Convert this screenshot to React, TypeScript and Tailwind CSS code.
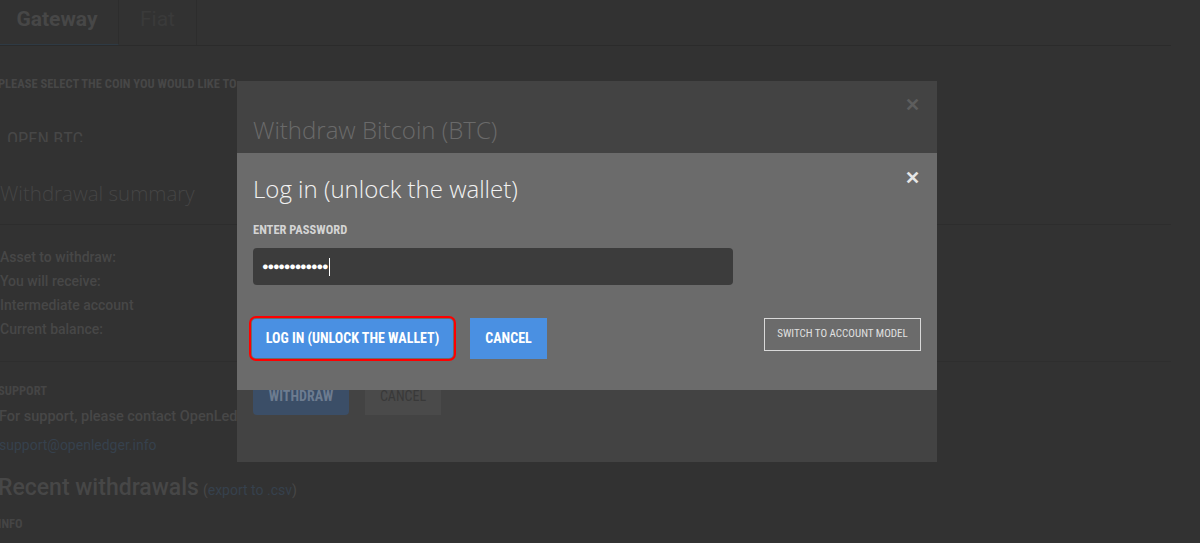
import React from "react";

const cond = { fontFamily: "'Liberation Sans Narrow', 'Roboto Condensed', Roboto, sans-serif" };
const light = { fontFamily: "'Open Sans', sans-serif" };

export default function App() {
  return (
    <div className="relative h-[543px] w-[1200px] overflow-hidden bg-[#323232]" style={{ fontFamily: "Roboto, 'Liberation Sans', sans-serif" }}>
      {/* Page underneath */}
      <div className="w-[1171px]">
        <div className="flex h-[46px] border-b border-[#2b2b2b]">
          <div className="flex w-[119px] items-center justify-center border-r border-b border-r-[#2d2d2d] border-b-[#2e3a44] pb-[5px] pr-[4px] text-[21px] font-bold text-[#474747]">Gateway</div>
          <div className="flex w-[78px] items-center justify-center border-r border-[#2d2d2d] pb-[5px] text-[21px] text-[#3a3a3a]">Fiat</div>
        </div>
        <div className="mt-[30px] -ml-[2px] h-[16px] text-[12.5px] font-bold leading-[16px] text-[#474747]" style={cond}>PLEASE SELECT THE COIN YOU WOULD LIKE TO</div>
        <div className="mt-[35px] h-[15px] overflow-hidden pl-[7px] text-[18.5px] leading-[24px] text-[#474747]" style={cond}>OPEN BTC</div>
        <div className="mt-[37px] h-[46px] border-b border-[#2d2d2d] text-[20.5px] font-light leading-[28px] text-[#454545]" style={light}>Withdrawal summary</div>
        <div className="mt-[20px] flex flex-col text-[14px] font-medium leading-[24px] text-[#474747]">
          <div>Asset to withdraw:</div>
          <div>You will receive:</div>
          <div>Intermediate account</div>
          <div>Current balance:</div>
        </div>
        <div className="mt-[20px] border-t border-[#2e2e2e]"></div>
        <div className="mt-[21px] -ml-[2px] h-[16px] text-[12.5px] font-bold leading-[16px] text-[#454545]" style={cond}>SUPPORT</div>
        <div className="mt-[8px] -ml-[1px] h-[20px] whitespace-nowrap text-[14.5px] font-medium leading-[20px] text-[#474747]">For support, please contact OpenLedger:</div>
        <div className="mt-[8px] -ml-[1px] h-[20px] text-[14px] leading-[20px] text-[#36414d]">support@openledger.info</div>
        <div className="mt-[18px] -ml-[2px] flex h-[30px] items-baseline leading-[30px]">
          <span className="text-[23px] font-medium text-[#474747]">Recent withdrawals</span>
          <span className="ml-[4px] text-[14px] text-[#474747]">(<span className="text-[#36414d]">export to .csv</span>)</span>
        </div>
        <div className="mt-[13px] -ml-[2px] h-[16px] text-[12.5px] font-bold leading-[16px] text-[#454545]" style={cond}>INFO</div>
      </div>

      {/* Withdraw modal (dimmed) */}
      <div className="absolute left-[237px] top-[81px] flex h-[381px] w-[700px] flex-col bg-[#434343] px-[16px]">
        <div className="absolute right-[17px] top-[15px] text-[18px] font-bold leading-none text-[#5d5d5d]">✕</div>
        <div className="mt-[31px] text-[24px] font-light text-[#6a6a6a]" style={light}>Withdraw Bitcoin (BTC)</div>
        <div className="mt-auto mb-[47px] flex gap-[16px]">
          <div className="flex h-[38px] w-[96px] items-center justify-center rounded-[4px] bg-[#3b4e67] text-[14px] font-bold text-[#6d7c90]" style={cond}>WITHDRAW</div>
          <div className="flex h-[38px] w-[76px] items-center justify-center bg-[#4a4a4a] text-[14px] text-[#393939]" style={cond}>CANCEL</div>
        </div>
      </div>

      {/* Login modal */}
      <div className="absolute left-[237px] top-[153px] h-[237px] w-[700px] bg-[#6b6b6b] px-[16px]">
        <div className="absolute right-[17px] top-[16px] text-[18px] font-bold leading-none text-[#e6e6e6]">✕</div>
        <div className="mt-[20px] text-[24px] font-light leading-[32px] text-[#f2f2f2]" style={light}>Log in (unlock the wallet)</div>
        <div className="mt-[17px] h-[16px] text-[12.5px] font-bold leading-[16px] text-[#d4d4d4]" style={cond}>ENTER PASSWORD</div>
        <div className="mt-[10px] flex h-[37px] w-[480px] items-center rounded-[4px] bg-[#3c3c3c] pl-[9px]">
          <span className="text-[11px] leading-none tracking-[-1.2px] text-white">●●●●●●●●●●●●</span>
          <span className="ml-[2px] h-[18px] w-[1px] bg-white"></span>
        </div>
        <div className="mt-[33px] flex items-start">
          <div className="-ml-[4px] -mt-[2px] rounded-[7px] border-[2px] border-[#ff0000] p-[1px]">
            <div className="flex h-[39px] w-[201px] items-center justify-center rounded-[4px] bg-[#4a90e2] text-[14px] font-bold text-white" style={cond}>LOG IN (UNLOCK THE WALLET)</div>
          </div>
          <div className="ml-[14px] flex h-[41px] w-[77px] items-center justify-center bg-[#4a90e2] text-[14px] font-bold text-white" style={cond}>CANCEL</div>
          <div className="ml-auto flex h-[33px] w-[157px] items-center justify-center border border-[#d9d9d9] text-[11px] text-[#e0e0e0]" style={cond}>SWITCH TO ACCOUNT MODEL</div>
        </div>
      </div>
    </div>
  );
}
